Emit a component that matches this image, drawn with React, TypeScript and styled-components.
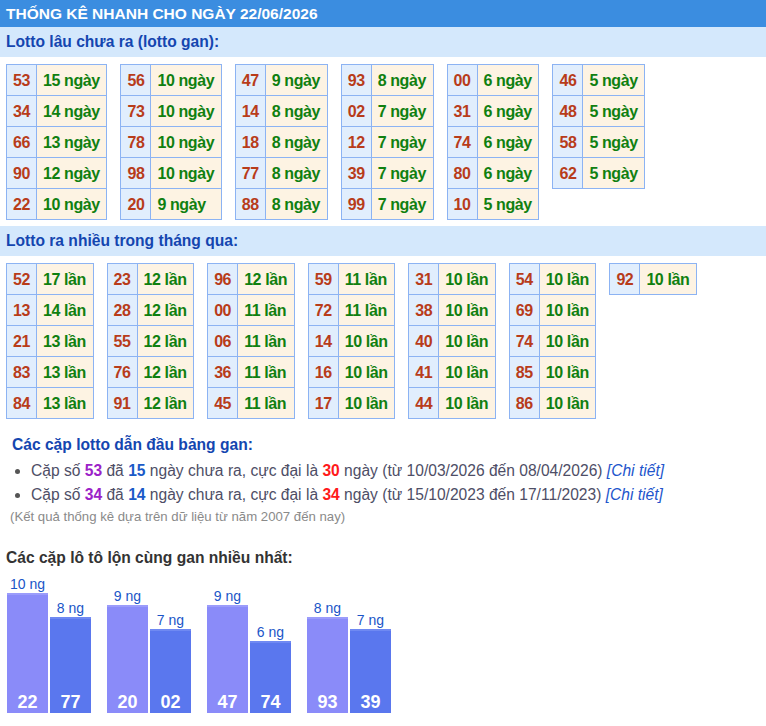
import React from "react";
import styled, { createGlobalStyle } from "styled-components";

const GlobalStyle = createGlobalStyle`
  html, body { margin: 0; padding: 0; background: #fff; }
  body { font-family: "Liberation Sans", Arial, sans-serif; }
`;

const Page = styled.div`
  width: 766px;
`;

const Header = styled.div`
  background: #3b8de0;
  color: #fff;
  font-weight: bold;
  font-size: 15.5px;
  height: 27px;
  line-height: 27px;
  padding-left: 6px;
  white-space: nowrap;
`;

const Band = styled.div`
  background: #d4e8fc;
  color: #1446b0;
  font-weight: bold;
  font-size: 15.6px;
  height: 30px;
  line-height: 30px;
  padding-left: 6px;
`;

const TablesWrap = styled.div`
  display: flex;
  flex-wrap: wrap;
  align-items: flex-start;
  gap: 13px;
  padding: 7px 6px 6px;
`;

const Table = styled.table`
  border-collapse: collapse;
  border: 1px solid #8cb3f3;
`;

const NumCell = styled.td`
  border: 1px solid #8cb3f3;
  background: #e1eefd;
  color: #b83c1a;
  font-weight: bold;
  font-size: 16px;
  letter-spacing: -0.4px;
  line-height: 29px;
  height: 30px;
  padding: 0 6px;
  text-align: center;
`;

const ValCell = styled.td`
  border: 1px solid #8cb3f3;
  background: #fdf3e3;
  color: #108010;
  font-weight: bold;
  font-size: 16px;
  letter-spacing: -0.4px;
  line-height: 29px;
  height: 30px;
  padding: 0 6.6px 0 6px;
  white-space: nowrap;
`;

const Info = styled.div`
  padding: 10px 0 0 12px;
`;

const InfoTitle = styled.div`
  color: #1446b0;
  font-weight: bold;
  font-size: 15.6px;
  line-height: 20px;
`;

const List = styled.ul`
  margin: 4px 0 0;
  padding-left: 19px;
  color: #4e4e66;
  font-size: 15.6px;
  line-height: 24px;
  li::marker { color: #555; }
`;

const Hl = styled.b<{ $c: string }>`
  color: ${(p) => p.$c};
`;

const Detail = styled.i`
  color: #2255cc;
`;

const Note = styled.div`
  color: #8a8a8a;
  font-size: 13.2px;
  line-height: 18px;
  margin: 1px 0 0 -2px;
`;

const ChartTitle = styled.div`
  color: #333;
  font-weight: bold;
  font-size: 15.6px;
  line-height: 20px;
  padding: 22px 0 0 6px;
`;

const Chart = styled.div`
  display: flex;
  align-items: flex-end;
  gap: 16px;
  padding: 0 0 13px 7px;
  margin-top: 8px;
`;

const Pair = styled.div`
  display: flex;
  align-items: flex-end;
  gap: 2px;
`;

const BarCol = styled.div`
  display: flex;
  flex-direction: column;
  align-items: center;
  width: 41px;
`;

const BarLabel = styled.div`
  color: #1a55c8;
  font-size: 14px;
  line-height: 16px;
  margin-bottom: 1px;
  white-space: nowrap;
`;

const Bar = styled.div<{ $alt?: boolean }>`
  width: 41px;
  box-sizing: border-box;
  background: ${(p) => (p.$alt ? "#5a77ee" : "#8a8bf9")};
  border-top: 2px solid ${(p) => (p.$alt ? "#6f89f2" : "#9b9cfb")};
  display: flex;
  align-items: flex-end;
  justify-content: center;
  color: #fff;
  font-weight: bold;
  font-size: 18px;
  line-height: 20px;
  padding-bottom: 1px;
`;

const gan: [string, number][][] = [
  [["53", 15], ["34", 14], ["66", 13], ["90", 12], ["22", 10]],
  [["56", 10], ["73", 10], ["78", 10], ["98", 10], ["20", 9]],
  [["47", 9], ["14", 8], ["18", 8], ["77", 8], ["88", 8]],
  [["93", 8], ["02", 7], ["12", 7], ["39", 7], ["99", 7]],
  [["00", 6], ["31", 6], ["74", 6], ["80", 6], ["10", 5]],
  [["46", 5], ["48", 5], ["58", 5], ["62", 5]],
];

const nhieu: [string, number][][] = [
  [["52", 17], ["13", 14], ["21", 13], ["83", 13], ["84", 13]],
  [["23", 12], ["28", 12], ["55", 12], ["76", 12], ["91", 12]],
  [["96", 12], ["00", 11], ["06", 11], ["36", 11], ["45", 11]],
  [["59", 11], ["72", 11], ["14", 10], ["16", 10], ["17", 10]],
  [["31", 10], ["38", 10], ["40", 10], ["41", 10], ["44", 10]],
  [["54", 10], ["69", 10], ["74", 10], ["85", 10], ["86", 10]],
  [["92", 10]],
];

const pairs: [string, number, string, number][] = [
  ["22", 10, "77", 8],
  ["20", 9, "02", 7],
  ["47", 9, "74", 6],
  ["93", 8, "39", 7],
];

function StatTables({ data, unit }: { data: [string, number][][]; unit: string }) {
  return (
    <TablesWrap>
      {data.map((col, i) => (
        <Table key={i}>
          <tbody>
            {col.map(([n, v]) => (
              <tr key={n}>
                <NumCell>{n}</NumCell>
                <ValCell>
                  {v} {unit}
                </ValCell>
              </tr>
            ))}
          </tbody>
        </Table>
      ))}
    </TablesWrap>
  );
}

export default function App() {
  return (
    <Page>
      <GlobalStyle />
      <Header>THỐNG KÊ NHANH CHO NGÀY 22/06/2026</Header>
      <Band>Lotto lâu chưa ra (lotto gan):</Band>
      <StatTables data={gan} unit="ngày" />
      <Band>Lotto ra nhiều trong tháng qua:</Band>
      <StatTables data={nhieu} unit="lần" />
      <Info>
        <InfoTitle>Các cặp lotto dẫn đầu bảng gan:</InfoTitle>
        <List>
          <li>
            Cặp số <Hl $c="#9b22c8">53</Hl> đã <Hl $c="#1a5ac8">15</Hl> ngày chưa ra, cực đại là{" "}
            <Hl $c="#ff1a1a">30</Hl> ngày (từ 10/03/2026 đến 08/04/2026) <Detail>[Chi tiết]</Detail>
          </li>
          <li>
            Cặp số <Hl $c="#9b22c8">34</Hl> đã <Hl $c="#1a5ac8">14</Hl> ngày chưa ra, cực đại là{" "}
            <Hl $c="#ff1a1a">34</Hl> ngày (từ 15/10/2023 đến 17/11/2023) <Detail>[Chi tiết]</Detail>
          </li>
        </List>
        <Note>(Kết quả thống kê dựa trên dữ liệu từ năm 2007 đến nay)</Note>
      </Info>
      <ChartTitle>Các cặp lô tô lộn cùng gan nhiều nhất:</ChartTitle>
      <Chart>
        {pairs.map(([a, av, b, bv]) => (
          <Pair key={a}>
            <BarCol>
              <BarLabel>{av} ng</BarLabel>
              <Bar style={{ height: av * 12 }}>{a}</Bar>
            </BarCol>
            <BarCol>
              <BarLabel>{bv} ng</BarLabel>
              <Bar $alt style={{ height: bv * 12 }}>{b}</Bar>
            </BarCol>
          </Pair>
        ))}
      </Chart>
    </Page>
  );
}
